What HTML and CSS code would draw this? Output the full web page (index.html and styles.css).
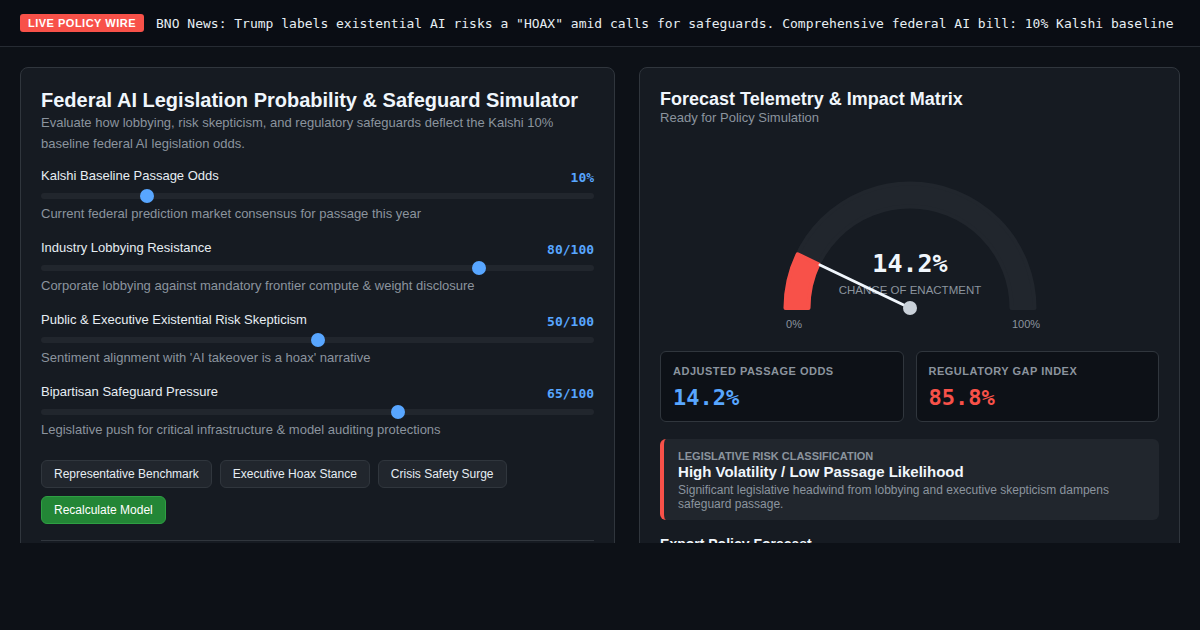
FILE: index.html
```html
<!DOCTYPE html>
<html lang="en">
<head>
    <meta charset="UTF-8">
    <meta name="viewport" content="width=device-width, initial-scale=1.0">
    <title>Federal AI Legislation Simulator</title>
    <link rel="stylesheet" href="styles.css">
</head>
<body>
    <header class="wire">
        <span class="wire-badge">LIVE POLICY WIRE</span>
        <div class="wire-track">
            <span class="wire-text">BNO News: Trump labels existential AI risks a "HOAX" amid calls for safeguards. Comprehensive federal AI bill: 10% Kalshi baseline odds this year.</span>
        </div>
    </header>

    <main class="workspace">
        <section class="card">
            <h1 class="card-title">Federal AI Legislation Probability &amp; Safeguard Simulator</h1>
            <p class="card-sub">Evaluate how lobbying, risk skepticism, and regulatory safeguards deflect the Kalshi 10% baseline federal AI legislation odds.</p>

            <div class="control">
                <div class="control-head">
                    <label for="baseline">Kalshi Baseline Passage Odds</label>
                    <span class="control-value">10%</span>
                </div>
                <input type="range" id="baseline" min="1" max="50" value="10">
                <p class="control-desc">Current federal prediction market consensus for passage this year</p>
            </div>

            <div class="control">
                <div class="control-head">
                    <label for="lobbying">Industry Lobbying Resistance</label>
                    <span class="control-value">80/100</span>
                </div>
                <input type="range" id="lobbying" min="0" max="100" value="80">
                <p class="control-desc">Corporate lobbying against mandatory frontier compute &amp; weight disclosure</p>
            </div>

            <div class="control">
                <div class="control-head">
                    <label for="skepticism">Public &amp; Executive Existential Risk Skepticism</label>
                    <span class="control-value">50/100</span>
                </div>
                <input type="range" id="skepticism" min="0" max="100" value="50">
                <p class="control-desc">Sentiment alignment with 'AI takeover is a hoax' narrative</p>
            </div>

            <div class="control">
                <div class="control-head">
                    <label for="safeguard">Bipartisan Safeguard Pressure</label>
                    <span class="control-value">65/100</span>
                </div>
                <input type="range" id="safeguard" min="0" max="100" value="65">
                <p class="control-desc">Legislative push for critical infrastructure &amp; model auditing protections</p>
            </div>

            <div class="presets">
                <button class="btn">Representative Benchmark</button>
                <button class="btn">Executive Hoax Stance</button>
                <button class="btn">Crisis Safety Surge</button>
                <button class="btn btn-primary">Recalculate Model</button>
            </div>

            <div class="card-section"></div>
        </section>

        <section class="card">
            <h2 class="panel-title">Forecast Telemetry &amp; Impact Matrix</h2>
            <p class="panel-status">Ready for Policy Simulation</p>

            <svg class="gauge" width="300" height="210" viewBox="0 0 300 210">
                <path class="gauge-bg" d="M 25.5 177 A 124.5 124.5 0 0 1 274.5 177 L 251.5 177 A 101.5 101.5 0 0 0 48.5 177 Z"/>
                <path class="gauge-fill" d="M 25.5 177 A 124.5 124.5 0 0 1 37.67 123.29 L 58.43 133.21 A 101.5 101.5 0 0 0 48.5 177 Z"/>
                <text class="gauge-value" x="150" y="141" text-anchor="middle">14.2%</text>
                <text class="gauge-caption" x="150" y="163" text-anchor="middle">CHANCE OF ENACTMENT</text>
                <line class="gauge-needle" x1="150" y1="177" x2="60" y2="134"/>
                <circle class="gauge-pivot" cx="150" cy="177" r="7"/>
                <text class="gauge-tick" x="34" y="197" text-anchor="middle">0%</text>
                <text class="gauge-tick" x="266" y="197" text-anchor="middle">100%</text>
            </svg>

            <div class="metrics">
                <div class="metric">
                    <div class="metric-label">Adjusted Passage Odds</div>
                    <div class="metric-value blue">14.2%</div>
                </div>
                <div class="metric">
                    <div class="metric-label">Regulatory Gap Index</div>
                    <div class="metric-value red">85.8%</div>
                </div>
            </div>

            <div class="risk">
                <div class="risk-label">Legislative Risk Classification</div>
                <div class="risk-title">High Volatility / Low Passage Likelihood</div>
                <p class="risk-desc">Significant legislative headwind from lobbying and executive skepticism dampens safeguard passage.</p>
            </div>

            <h3 class="section-title export">Export Policy Forecast</h3>
        </section>
    </main>
</body>
</html>
```
FILE: styles.css
```css
body {
    margin: 0;
    background-color: #0d1117;
    color: #e6edf3;
    font-family: "Liberation Sans", Arial, sans-serif;
}
.wire {
    display: flex;
    align-items: center;
    gap: 12px;
    height: 46px;
    padding: 0 20px;
    background-color: #0a0d14;
    border-bottom: 1px solid #262b33;
}
.wire-badge {
    flex: none;
    background-color: #f85149;
    color: #fff;
    font-size: 11px;
    font-weight: bold;
    letter-spacing: 0.5px;
    line-height: 18px;
    padding: 0 8px;
    border-radius: 3px;
}
.wire-track {
    flex: 1;
    overflow: hidden;
    white-space: nowrap;
}
.wire-text {
    font-family: "DejaVu Sans Mono", monospace;
    font-size: 13px;
    color: #e6edf3;
}
.workspace {
    display: grid;
    grid-template-columns: 1.1fr 1fr;
    gap: 24px;
    align-items: start;
    height: 476px;
    padding: 20px 20px 0;
    overflow: hidden;
}
.card {
    background-color: #161b22;
    border: 1px solid #30363d;
    border-radius: 8px;
    padding: 20px;
}
.card-title {
    margin: 0;
    font-size: 20px;
    line-height: 24px;
    color: #f0f6fc;
}
.card-sub {
    margin: 0 0 14px;
    font-size: 13px;
    line-height: 21px;
    color: #8b949e;
}
.control {
    margin-bottom: 18px;
}
.control-head {
    display: flex;
    justify-content: space-between;
    align-items: flex-end;
    height: 18px;
}
.control-head label {
    font-size: 13px;
    line-height: 16px;
    align-self: flex-start;
    color: #e6edf3;
}
.control-value {
    font-family: "DejaVu Sans Mono", monospace;
    font-size: 13px;
    font-weight: bold;
    line-height: 16px;
    color: #58a6ff;
}
.control input[type=range] {
    -webkit-appearance: none;
    appearance: none;
    display: block;
    width: 100%;
    height: 14px;
    margin: 3px 0;
    background: transparent;
}
.control input[type=range]::-webkit-slider-runnable-track {
    height: 6px;
    background-color: #21262d;
    border-radius: 3px;
}
.control input[type=range]::-webkit-slider-thumb {
    -webkit-appearance: none;
    width: 14px;
    height: 14px;
    margin-top: -4px;
    border-radius: 50%;
    background-color: #58a6ff;
}
.control-desc {
    margin: 0;
    font-size: 13px;
    line-height: 16px;
    color: #8b949e;
}
.presets {
    display: flex;
    flex-wrap: wrap;
    gap: 8px;
    margin-top: 22px;
}
.btn {
    font-family: "Liberation Sans", Arial, sans-serif;
    font-size: 12px;
    height: 28px;
    padding: 0 12px;
    color: #e6edf3;
    background-color: #21262d;
    border: 1px solid #30363d;
    border-radius: 6px;
}
.btn-primary {
    background-color: #238636;
    border-color: #2ea043;
    color: #fff;
}
.card-section {
    height: 40px;
    margin-top: 16px;
    border-top: 1px solid #30363d;
}
.section-title {
    margin: 0;
    font-size: 14px;
    color: #f0f6fc;
}
.panel-title {
    margin: 0;
    font-size: 18px;
    line-height: 22px;
    color: #f0f6fc;
}
.panel-status {
    margin: 0;
    font-size: 13px;
    line-height: 16px;
    color: #8b949e;
}
.gauge {
    display: block;
    margin: 5px auto 0;
}
.gauge-bg {
    fill: #21262d;
    stroke: #21262d;
    stroke-width: 4;
    stroke-linejoin: round;
}
.gauge-fill {
    fill: #f85149;
    stroke: #f85149;
    stroke-width: 4;
    stroke-linejoin: round;
}
.gauge-value {
    font-family: "DejaVu Sans Mono", monospace;
    font-size: 25px;
    font-weight: bold;
    fill: #f0f6fc;
}
.gauge-caption {
    font-size: 11.5px;
    fill: #8b949e;
}
.gauge-needle {
    stroke: #f0f6fc;
    stroke-width: 3;
    stroke-linecap: round;
}
.gauge-pivot {
    fill: #c9d1d9;
}
.gauge-tick {
    font-size: 11px;
    fill: #8b949e;
}
.metrics {
    display: grid;
    grid-template-columns: 1fr 1fr;
    gap: 12px;
    margin-top: 10px;
}
.metric {
    background-color: #0d1117;
    border: 1px solid #30363d;
    border-radius: 6px;
    padding: 13px 12px 10px;
}
.metric-label {
    font-size: 11px;
    font-weight: bold;
    line-height: 13px;
    letter-spacing: 0.5px;
    text-transform: uppercase;
    color: #8b949e;
}
.metric-value {
    margin-top: 7px;
    font-family: "DejaVu Sans Mono", monospace;
    font-size: 22px;
    font-weight: bold;
    line-height: 26px;
}
.blue {
    color: #58a6ff;
}
.red {
    color: #f85149;
}
.risk {
    margin-top: 17px;
    padding: 11px 14px 9px;
    background-color: #21262d;
    border-left: 4px solid #f85149;
    border-radius: 6px;
}
.risk-label {
    font-size: 11px;
    font-weight: bold;
    line-height: 13px;
    text-transform: uppercase;
    color: #8b949e;
}
.risk-title {
    font-size: 15px;
    font-weight: bold;
    line-height: 18px;
    color: #f0f6fc;
}
.risk-desc {
    margin: 2px 0 0;
    font-size: 12px;
    line-height: 14px;
    color: #8b949e;
}
.export {
    margin-top: 16px;
}
```
